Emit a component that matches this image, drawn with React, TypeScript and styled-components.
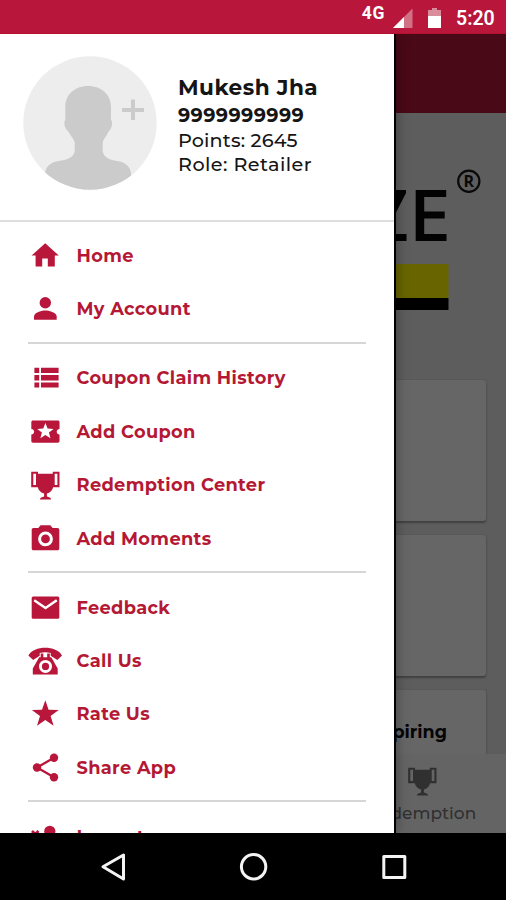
import React from 'react';
import styled, { createGlobalStyle } from 'styled-components';

const RED = '#b8163a';
const LABEL_RED = '#b51834';

const Global = createGlobalStyle`
  * { box-sizing: border-box; }
  body { margin: 0; background: #000; font-family: Montserrat, Inter, sans-serif; }
`;

const Phone = styled.div`
  width: 506px;
  height: 900px;
  display: flex;
  flex-direction: column;
  overflow: hidden;
  background: #000;
`;

const StatusBar = styled.header`
  height: 34px;
  flex: none;
  display: flex;
  justify-content: flex-end;
  background: ${RED};
  color: #fff;
  font-family: Roboto, sans-serif;
  border-bottom: 1px solid #b5102c;
  padding-right: 11px;
`;
const Network = styled.span`
  font-size: 17.5px;
  font-weight: 700;
  line-height: 20px;
  padding-top: 3px;
  letter-spacing: 0.6px;
  margin-right: 7px;
`;
const StatusIcons = styled.svg`
  width: 50px;
  height: 30px;
  margin-right: 14px;
`;
const Clock = styled.span`
  font-size: 19.5px;
  font-weight: 600;
  line-height: 22px;
  padding-top: 8px;
  width: 39px;
  white-space: nowrap;
`;

const Screen = styled.main`
  height: 799px;
  flex: none;
  position: relative;
  overflow: hidden;
  background: #5d5d5d;
`;
const Backdrop = styled.div`
  height: 100%;
  display: flex;
  flex-direction: column;
`;
const AppBar = styled.div`
  height: 79px;
  flex: none;
  background: #4a0917;
`;
const Banner = styled.div`
  height: 266px;
  flex: none;
  display: flex;
  justify-content: flex-end;
`;
const Logo = styled.svg`
  width: 126px;
  height: 266px;
`;
const Cards = styled.div`
  height: 375px;
  flex: none;
  overflow: hidden;
  display: flex;
  flex-direction: column;
  gap: 14px;
  padding: 1px 20px 0;
`;
const Card = styled.section`
  height: 141px;
  flex: none;
  background: #666;
  border-radius: 3px;
  box-shadow: 0 2px 2px #414141, 0 0 2px #505050;
  display: flex;
  justify-content: flex-end;
  padding: 30px 39px 0;
  font-size: 17.5px;
  line-height: 24px;
  font-weight: 700;
  color: #050505;
`;
const BottomNav = styled.nav`
  flex: 1;
  display: flex;
  justify-content: flex-end;
  background: #646464;
`;
const NavItem = styled.div`
  width: 126px;
  margin-right: 21px;
  display: flex;
  flex-direction: column;
  align-items: center;
  gap: 4px;
  padding-top: 10px;
  color: #303030;
  font-size: 17px;
  line-height: 22px;
  font-weight: 500;
`;

const Drawer = styled.aside`
  position: absolute;
  left: 0;
  top: 0;
  width: 396px;
  height: 100%;
  overflow: hidden;
  background: #fff;
  border-right: 2px solid #000;
  box-shadow: 0 0 12px rgba(0, 0, 0, 0.35);
`;
const Profile = styled.div`
  height: 188px;
  border-bottom: 2px solid #dedede;
  display: flex;
  padding: 22px 0 0 23px;
`;
const Avatar = styled.svg`
  width: 134px;
  height: 134px;
  margin-right: 21px;
`;
const Details = styled.div`
  display: flex;
  flex-direction: column;
  padding-top: 17px;
  color: #151515;
`;
const Detail = styled.div<{ $size: number; $weight: number; $track: number; $height: number }>`
  font-size: ${(p) => p.$size}px;
  font-weight: ${(p) => p.$weight};
  letter-spacing: ${(p) => p.$track}px;
  line-height: ${(p) => p.$height}px;
  white-space: nowrap;
`;

const Menu = styled.ul`
  list-style: none;
  margin: 0;
  padding: 7.3px 0 0;
`;
const Group = styled.li`
  & + & {
    margin: 6px 0 0;
  }
  & + &::before {
    content: '';
    display: block;
    height: 2px;
    margin: 0 28px 7.6px;
    background: #d6d6d6;
  }
`;
const Item = styled.a`
  height: 53.4px;
  display: flex;
  align-items: center;
  padding-left: 28px;
  gap: 14.5px;
  color: ${RED};
`;
const Label = styled.span`
  color: ${LABEL_RED};
  font-size: 17.8px;
  font-weight: 700;
  letter-spacing: 0.34px;
  line-height: 24px;
  white-space: nowrap;
`;
const Glyph = styled.svg`
  width: 34px;
  height: 34px;
  flex: none;
  fill: currentColor;
  overflow: visible;
`;

const AndroidBar = styled.footer`
  flex: 1;
  display: flex;
  background: #000;
`;
const AndroidKeys = styled.svg`
  width: 506px;
  height: 67px;
  fill: none;
  stroke: #f4f4f4;
  stroke-width: 3;
  stroke-linejoin: round;
`;

const TrophyShape = () => (
  <path
    fillRule="evenodd"
    d="M3.2 3.7h6.8v2h14.8v-2h6.7v15.5h-6.4c-.6 3.4-3.2 5.5-6.2 6.2v3c2.2.4 3.9 1.3 4.3 3H11.8c.4-1.7 2.1-2.6 4.3-3v-3c-3-.7-5.7-2.8-6.3-6.2H3.2zM5.3 5.8v11.2h2.7V5.8zM26.7 5.8v11.2h2.7V5.8z"
  />
);

const icons: Record<string, React.ReactNode> = {
  home: <path d="M14.2 27.6v-8h5.6v8h7v-11h4L17.2 4.3 3.6 16.6h4v11z" />,
  person: (
    <>
      <circle cx="17.3" cy="10.8" r="5.7" />
      <path d="M6 27.7v-3.1c0-3.6 6.5-6 11.3-6s11.4 2.4 11.4 6v3.1z" />
    </>
  ),
  list: (
    <path d="M6.4 6.8h4.8v5.2H6.4zM13 6.8h17.6v5.2H13zM6.4 14.1h4.8v5.3H6.4zM13 14.1h17.6v5.3H13zM6.4 21.5h4.8v5H6.4zM13 21.5h17.6v5H13z" />
  ),
  ticket: (
    <path
      transform="translate(.5 .1) scale(1.41 1.38)"
      d="M20 12c0-1.1.9-2 2-2V5.200c0-.7-.5-1.200-1.200-1.200H3.200C2.500 4 2 4.500 2 5.200V10c1.100 0 2 .9 2 2s-.9 2-2 2v4.800c0 .7.5 1.200 1.200 1.200h17.600c.7 0 1.200-.5 1.200-1.200V14c-1.100 0-2-.9-2-2zm-4.420 4.800L12 14.500l-3.580 2.300 1.080-4.120-3.290-2.690 4.240-.250L12 5.800l1.540 3.950 4.240.250-3.290 2.690 1.090 4.110z"
    />
  ),
  trophy: <TrophyShape />,
  camera: (
    <path
      fillRule="evenodd"
      d="M12.6 3.2 10.3 6H5.500C4.500 6 3.700 6.800 3.700 7.800v18.700c0 1 .8 1.800 1.800 1.800h24c1 0 1.800-.8 1.800-1.800V7.800c0-1-.8-1.800-1.800-1.800h-4.800l-2.400-2.800zM17.500 9.500a7.400 7.400 0 1 1 0 14.800 7.400 7.400 0 0 1 0-14.800zm0 3a4.400 4.400 0 1 0 0 8.800 4.400 4.400 0 0 0 0-8.800z"
    />
  ),
  mail: (
    <>
      <rect x="3.700" y="5.500" width="27.600" height="22.300" rx="1.500" />
      <path d="m6.200 9.300 11.300 7.700 11.300-7.700" fill="none" stroke="#fff" strokeWidth="2.500" />
    </>
  ),
  phone: (
    <>
      <path d="M.4 11.500C3 6.200 10.400 3.700 17.200 3.700S31.400 6.200 34 11.500l-4.600 4.600-6.700-4.300V9a22 22 0 0 0-11 0v2.800L5.100 16.100z" />
      <path
        fillRule="evenodd"
        d="M12.700 13.200V9.500h2.600v3.700h3.900V9.500h2.600v3.700h1.500l6.400 11.300v5.900H4.800v-5.900l6.400-11.300zM17.500 15.900a6.500 6.500 0 1 0 0 13 6.500 6.500 0 0 0 0-13zm0 2.900a3.600 3.600 0 1 1 0 7.200 3.600 3.600 0 0 1 0-7.200z"
      />
    </>
  ),
  star: <path d="m17.300 3.300 3.300 9.500 10.100.200-8.100 6.100 3 9.700-8.300-5.900L9 28.800l3-9.700L3.900 13l10.100-.200z" />,
  share: (
    <>
      <path d="M26 6.800 9 16.500l17 9.800" fill="none" stroke="currentColor" strokeWidth="2.300" />
      <circle cx="26" cy="6.800" r="4.200" />
      <circle cx="9" cy="16.500" r="4.200" />
      <circle cx="26" cy="26.300" r="4.200" />
    </>
  ),
  logout: (
    <>
      <circle cx="21.800" cy="11.300" r="5.600" />
      <path d="m4 11 6.500 6.500m0-6.500L4 17.500" fill="none" stroke="currentColor" strokeWidth="2.800" />
      <path d="M10.500 28v-3c0-3.600 6.500-6 11.300-6s11.300 2.400 11.300 6v3z" />
    </>
  ),
};

type Entry = { icon: string; text: string };
const groups: Entry[][] = [
  [
    { icon: 'home', text: 'Home' },
    { icon: 'person', text: 'My Account' },
  ],
  [
    { icon: 'list', text: 'Coupon Claim History' },
    { icon: 'ticket', text: 'Add Coupon' },
    { icon: 'trophy', text: 'Redemption Center' },
    { icon: 'camera', text: 'Add Moments' },
  ],
  [
    { icon: 'mail', text: 'Feedback' },
    { icon: 'phone', text: 'Call Us' },
    { icon: 'star', text: 'Rate Us' },
    { icon: 'share', text: 'Share App' },
  ],
  [{ icon: 'logout', text: 'Logout' }],
];

export default function App() {
  return (
    <Phone>
      <Global />
      <StatusBar>
        <Network>4G</Network>
        <StatusIcons viewBox="0 0 50 30">
          <path d="M20.500 8.500V28H1z" fill="#d27085" />
          <path d="M12 17v11H1z" fill="#fff" />
          <path d="M40 8h5v2h4v18H36V10h4z" fill="#d98c9c" />
          <path d="M36 16h13v12H36z" fill="#fff" />
        </StatusIcons>
        <Clock>5:20</Clock>
      </StatusBar>
      <Screen>
        <Backdrop>
          <AppBar />
          <Banner>
            <Logo viewBox="380 113 126 266">
              <path d="M376 190h30v3L385 234h21.500v7H374v-6l20-34v-4h-18z" fill="#030303" />
              <path d="M415.700 190h30.500v7h-22v14.500h20.500v7h-20.500V234h22.300v7h-30.800z" fill="#030303" />
              <circle cx="468.800" cy="181.300" r="10.600" fill="none" stroke="#090909" strokeWidth="2.200" />
              <text x="468.900" y="187" textAnchor="middle" fontFamily="Open Sans, sans-serif" fontSize="16" fontWeight="700" fill="#090909">R</text>
              <path d="M380 264h68.500v34H380z" fill="#686500" />
              <path d="M380 298h68.500v12H380z" fill="#000" />
            </Logo>
          </Banner>
          <Cards>
            <Card />
            <Card />
            <Card>Expiring</Card>
          </Cards>
          <BottomNav>
            <NavItem>
              <Glyph viewBox="0 0 34 34"><TrophyShape /></Glyph>
              Redemption
            </NavItem>
          </BottomNav>
        </Backdrop>
        <Drawer>
          <Profile>
            <Avatar viewBox="0 0 134 134">
              <defs>
                <clipPath id="round"><circle cx="67" cy="67" r="66.700" /></clipPath>
              </defs>
              <circle cx="67" cy="67" r="66.700" fill="#ededed" />
              <path
                clipPath="url(#round)"
                fill="#cbcbcb"
                d="M65 30c14 0 23 9 23 21v13c1.500 1 1.300 4 .5 7-1 3-3 4-4.500 7.500-1.500 3-4 5-4.300 8.500v8c1 7 8 9 14.300 10 8 1 13 5 14 12v25H22v-25c1-7 6-11 14-12 7-1 14.700-3 15.700-10v-8c-.3-3.500-3-5.500-4.500-8.500C45.500 75 43 74 42 71c-.8-3-1-6 .3-7V51c0-12 9-21 22.700-21z"
              />
              <path d="M99 54h22M110 43.500V64" stroke="#cbcbcb" strokeWidth="4" />
            </Avatar>
            <Details>
              <Detail $size={21.6} $weight={700} $track={0.5} $height={28}>Mukesh Jha</Detail>
              <Detail $size={19.2} $weight={700} $track={0.4} $height={29}>9999999999</Detail>
              <Detail $size={19.2} $weight={500} $track={0.15} $height={20}>Points: 2645</Detail>
              <Detail $size={19.2} $weight={500} $track={0.45} $height={28}>Role: Retailer</Detail>
            </Details>
          </Profile>
          <Menu>
            {groups.map((group, i) => (
              <Group key={i}>
                {group.map((entry) => (
                  <Item key={entry.text}>
                    <Glyph viewBox="0 0 34 34">{icons[entry.icon]}</Glyph>
                    <Label>{entry.text}</Label>
                  </Item>
                ))}
              </Group>
            ))}
          </Menu>
        </Drawer>
      </Screen>
      <AndroidBar>
        <AndroidKeys viewBox="0 833 506 67">
          <path d="M103 866.800 123.500 855v24z" />
          <circle cx="253.600" cy="866.800" r="12.200" />
          <rect x="383.800" y="856.500" width="21" height="21" />
        </AndroidKeys>
      </AndroidBar>
    </Phone>
  );
}
